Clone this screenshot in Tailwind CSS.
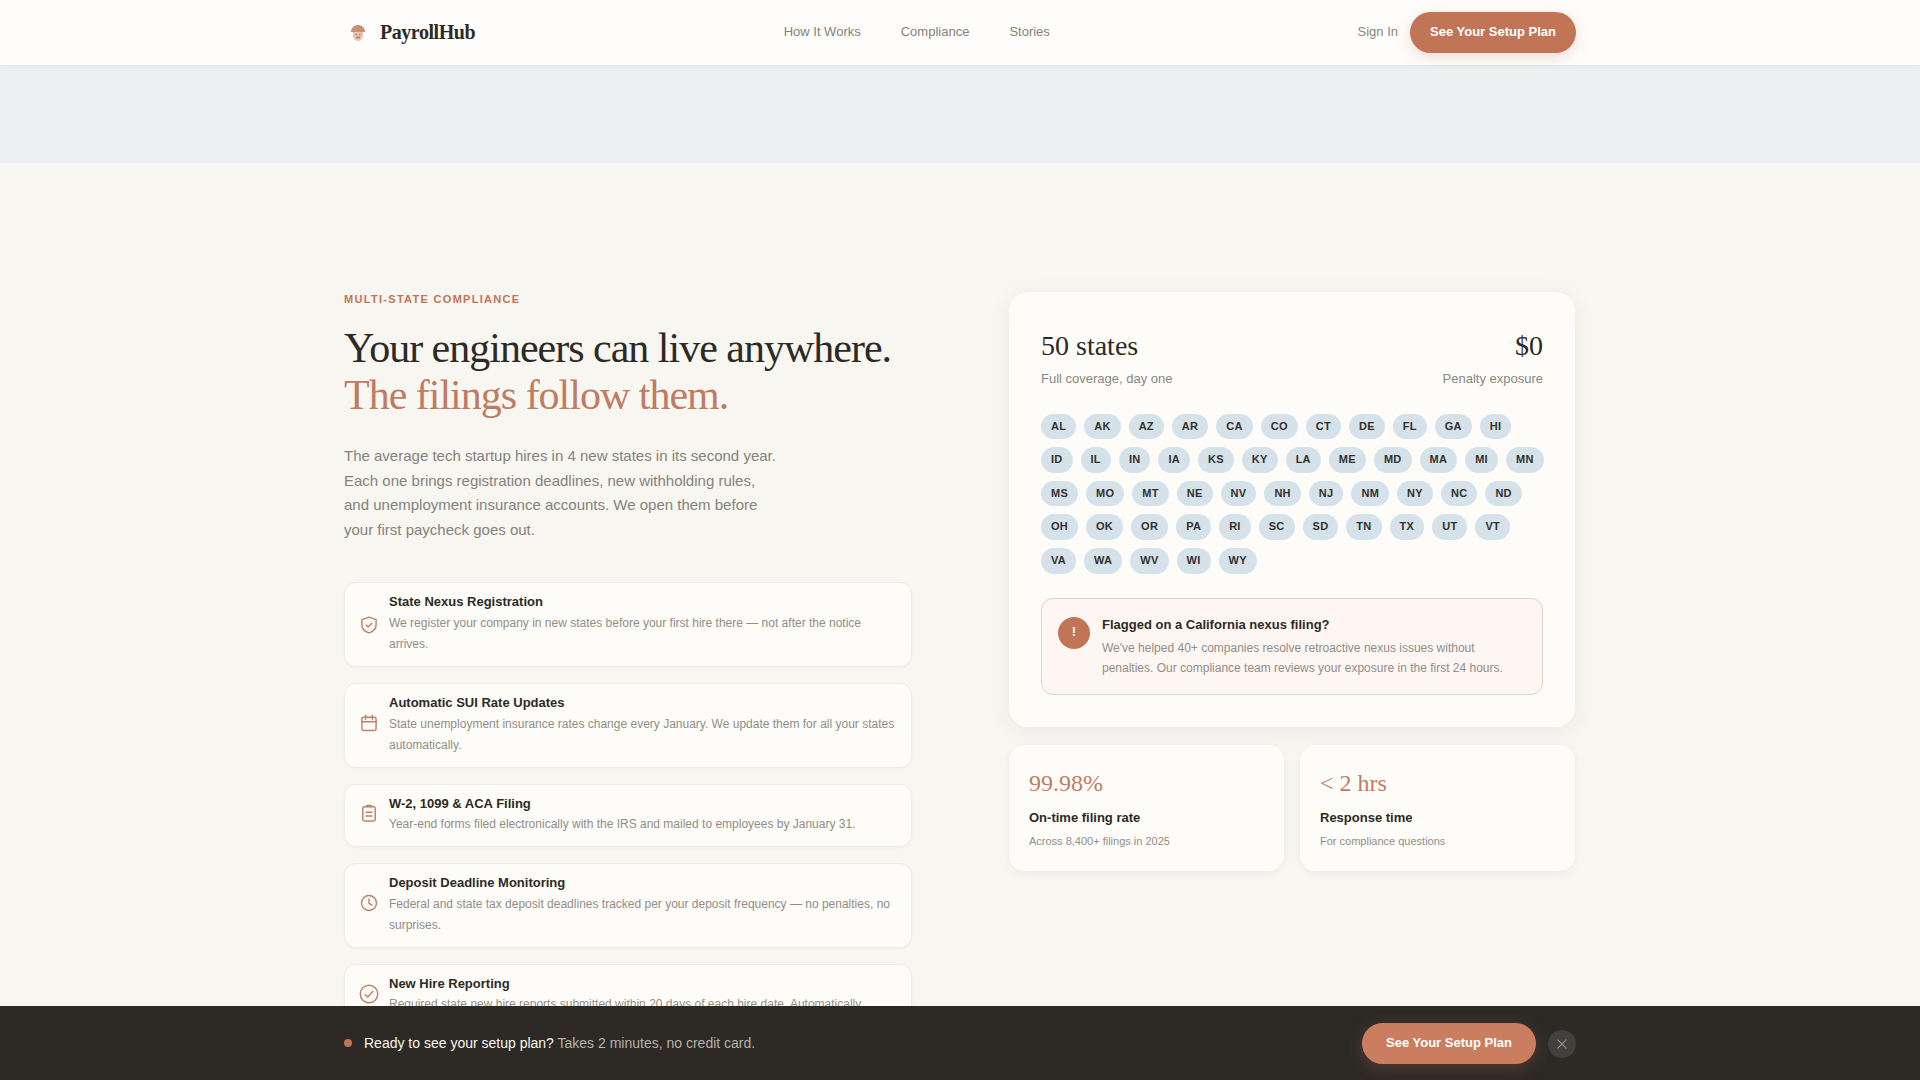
<!DOCTYPE html>
<html lang="en">
<head>
    <meta charset="UTF-8">
    <meta name="viewport" content="width=device-width, initial-scale=1.0">
    <title>PayrollHub - Multi-State Compliance</title>
    <script src="https://cdn.jsdelivr.net/npm/@tailwindcss/browser@4"></script>
</head>
<body class="h-screen overflow-hidden bg-[#f8f6f0] font-['Liberation_Sans',Arial,sans-serif] leading-[1.6] text-[#2d2a26]">

<!-- Nav -->
<header class="h-[65px] bg-[#fefdfb] shadow-[0_1px_3px_rgba(45,42,38,0.06)] relative">
    <div class="max-w-[1280px] mx-auto px-6 h-full flex items-center justify-between">
        <div class="flex items-center w-[300px]">
            <svg class="w-4 h-[18px] ml-1.5 mr-3.5" viewBox="0 0 16 18">
                <path d="M.8 8C1.200 3.500 4.500 1 8 1s6.800 2.500 7.200 7z" fill="#c98f78"/>
                <path d="M3 8h10v3.500c0 3-2.500 5.500-5 5.500s-5-2.500-5-5.500z" fill="#e8c4b3"/>
                <path d="M5.500 10.500h1.500M9 10.500h1.500M6 13.500h4" stroke="#b9745a" stroke-width="1.300" fill="none"/>
            </svg>
            <span class="font-['Liberation_Serif',serif] font-bold text-[20px] tracking-[-0.45px] -mt-0.5">PayrollHub</span>
        </div>
        <nav class="flex items-center gap-10 text-[13px] text-[#85827c] -ml-[168px]">
            <a href="#">How It Works</a>
            <a href="#">Compliance</a>
            <a href="#">Stories</a>
        </nav>
        <div class="flex items-center gap-3">
            <a href="#" class="text-[13px] text-[#8a8780]">Sign In</a>
            <a href="#" class="h-[41px] w-[166px] flex items-center justify-center rounded-full bg-[#c27556] text-white text-[13px] font-bold shadow-[0_4px_14px_rgba(194,117,86,0.25)]">See Your Setup Plan</a>
        </div>
    </div>
</header>

<!-- Band under nav -->
<div class="h-[98px] bg-[#ecf0f1]"></div>

<main class="max-w-[1280px] mx-auto px-6 pt-[129px] grid grid-cols-[568px_566px] gap-x-[97px] items-start">
    <!-- Left column -->
    <section>
        <p class="-mt-px text-[11px] leading-4 font-bold tracking-[1.3px] uppercase text-[#c27556] mb-[18px]">Multi-State Compliance</p>
        <h1 class="font-['Liberation_Serif',serif] font-normal text-[42px] leading-[46.500px] tracking-[-1px] mb-[26px]">
            Your engineers can live anywhere.<br>
            <span class="text-[#bf7c62]">The filings follow them.</span>
        </h1>
        <p class="text-[15px] leading-[24.500px] text-[#85827c] max-w-[436px] mb-10">The average tech startup hires in 4 new states in its second year. Each one brings registration deadlines, new withholding rules, and unemployment insurance accounts. We open them before your first paycheck goes out.</p>

        <div class="flex flex-col gap-4">
            <div class="flex items-center gap-[10px] bg-[#fdfcf9] border border-[#eeece6] rounded-xl pl-[14px] pr-4 py-[11px] shadow-[0_1px_3px_rgba(45,42,38,0.03)]">
                <svg class="w-5 h-5 shrink-0" viewBox="0 0 24 24" fill="none" stroke="#bf8066" stroke-width="1.700" stroke-linecap="round" stroke-linejoin="round">
                    <path d="M12 2.500l8.500 3v6.500c0 5-3.500 8-8.500 9.500-5-1.500-8.500-4.500-8.500-9.500V5.500z"/>
                    <path d="M8.500 12l2.500 2.500 4.500-4.500"/>
                </svg>
                <div>
                    <h3 class="text-[13px] leading-4 font-bold mb-[3px]">State Nexus Registration</h3>
                    <p class="text-[12px] leading-[21px] text-[#918e87]">We register your company in new states before your first hire there — not after the notice arrives.</p>
                </div>
            </div>
            <div class="flex items-center gap-[10px] bg-[#fdfcf9] border border-[#eeece6] rounded-xl pl-[14px] pr-4 py-[11px] shadow-[0_1px_3px_rgba(45,42,38,0.03)]">
                <svg class="w-5 h-5 shrink-0 -translate-y-0.5" viewBox="0 0 24 24" fill="none" stroke="#bf8066" stroke-width="1.700" stroke-linecap="round" stroke-linejoin="round">
                    <rect x="3.500" y="5" width="17" height="16" rx="2"/>
                    <path d="M8 2.500v5M16 2.500v5M3.500 10.500h17"/>
                </svg>
                <div>
                    <h3 class="text-[13px] leading-4 font-bold mb-[2.5px]">Automatic SUI Rate Updates</h3>
                    <p class="text-[12px] leading-[21px] text-[#918e87]">State unemployment insurance rates change every January. We update them for all your states automatically.</p>
                </div>
            </div>
            <div class="flex items-center gap-[10px] bg-[#fdfcf9] border border-[#eeece6] rounded-xl pl-[14px] pr-4 py-[11px] shadow-[0_1px_3px_rgba(45,42,38,0.03)]">
                <svg class="w-5 h-5 shrink-0 -translate-y-0.5" viewBox="0 0 24 24" fill="none" stroke="#bf8066" stroke-width="1.700" stroke-linecap="round" stroke-linejoin="round">
                    <rect x="4.500" y="4.500" width="15" height="17" rx="2"/>
                    <path d="M9.500 4.500V3h5v1.500M8.500 11h7M8.500 15.500h7"/>
                </svg>
                <div>
                    <h3 class="text-[13px] leading-4 font-bold mb-[2.5px]">W-2, 1099 &amp; ACA Filing</h3>
                    <p class="text-[12px] leading-[21px] text-[#918e87]">Year-end forms filed electronically with the IRS and mailed to employees by January 31.</p>
                </div>
            </div>
            <div class="flex items-center gap-[10px] bg-[#fdfcf9] border border-[#eeece6] rounded-xl pl-[14px] pr-4 py-[11px] shadow-[0_1px_3px_rgba(45,42,38,0.03)]">
                <svg class="w-5 h-5 shrink-0 -translate-y-0.5" viewBox="0 0 24 24" fill="none" stroke="#bf8066" stroke-width="1.700" stroke-linecap="round" stroke-linejoin="round">
                    <circle cx="12" cy="12" r="9"/>
                    <path d="M12 7v5.500l3.500 2"/>
                </svg>
                <div>
                    <h3 class="text-[13px] leading-4 font-bold mb-[2.5px]">Deposit Deadline Monitoring</h3>
                    <p class="text-[12px] leading-[21px] text-[#918e87]">Federal and state tax deposit deadlines tracked per your deposit frequency — no penalties, no surprises.</p>
                </div>
            </div>
            <div class="flex items-center gap-[10px] bg-[#fdfcf9] border border-[#eeece6] rounded-xl pl-[14px] pr-4 py-[11px] shadow-[0_1px_3px_rgba(45,42,38,0.03)]">
                <svg class="w-5 h-5 shrink-0 -translate-y-px" viewBox="0 0 24 24" fill="none" stroke="#bf8066" stroke-width="1.700" stroke-linecap="round" stroke-linejoin="round">
                    <circle cx="12" cy="12" r="10.500"/>
                    <path d="M7.500 12.500l3 3 6-6.500"/>
                </svg>
                <div>
                    <h3 class="text-[13px] leading-4 font-bold mb-[2.5px]">New Hire Reporting</h3>
                    <p class="text-[12px] leading-[21px] text-[#918e87]">Required state new hire reports submitted within 20 days of each hire date. Automatically.</p>
                </div>
            </div>
        </div>
    </section>

    <!-- Right column -->
    <section>
        <div class="bg-[#fdfcf9] rounded-[20px] p-8 shadow-[0_4px_24px_rgba(45,42,38,0.06)]">
            <div class="flex justify-between">
                <div>
                    <div class="font-['Liberation_Serif',serif] text-[28px]">50 states</div>
                    <div class="text-[13px] text-[#8a8780]">Full coverage, day one</div>
                </div>
                <div class="text-right">
                    <div class="font-['Liberation_Serif',serif] text-[28px]">$0</div>
                    <div class="text-[13px] text-[#8a8780]">Penalty exposure</div>
                </div>
            </div>

            <div class="flex flex-wrap gap-2 mt-6 -mr-1 text-[11px] font-bold tracking-[0.27px] text-[#33302c]">
                <span class="bg-[#d6e2ea] rounded-full px-2.5 py-1">AL</span>
                <span class="bg-[#d6e2ea] rounded-full px-2.5 py-1">AK</span>
                <span class="bg-[#d6e2ea] rounded-full px-2.5 py-1">AZ</span>
                <span class="bg-[#d6e2ea] rounded-full px-2.5 py-1">AR</span>
                <span class="bg-[#d6e2ea] rounded-full px-2.5 py-1">CA</span>
                <span class="bg-[#d6e2ea] rounded-full px-2.5 py-1">CO</span>
                <span class="bg-[#d6e2ea] rounded-full px-2.5 py-1">CT</span>
                <span class="bg-[#d6e2ea] rounded-full px-2.5 py-1">DE</span>
                <span class="bg-[#d6e2ea] rounded-full px-2.5 py-1">FL</span>
                <span class="bg-[#d6e2ea] rounded-full px-2.5 py-1">GA</span>
                <span class="bg-[#d6e2ea] rounded-full px-2.5 py-1">HI</span>
                <span class="bg-[#d6e2ea] rounded-full px-2.5 py-1">ID</span>
                <span class="bg-[#d6e2ea] rounded-full px-2.5 py-1">IL</span>
                <span class="bg-[#d6e2ea] rounded-full px-2.5 py-1">IN</span>
                <span class="bg-[#d6e2ea] rounded-full px-2.5 py-1">IA</span>
                <span class="bg-[#d6e2ea] rounded-full px-2.5 py-1">KS</span>
                <span class="bg-[#d6e2ea] rounded-full px-2.5 py-1">KY</span>
                <span class="bg-[#d6e2ea] rounded-full px-2.5 py-1">LA</span>
                <span class="bg-[#d6e2ea] rounded-full px-2.5 py-1">ME</span>
                <span class="bg-[#d6e2ea] rounded-full px-2.5 py-1">MD</span>
                <span class="bg-[#d6e2ea] rounded-full px-2.5 py-1">MA</span>
                <span class="bg-[#d6e2ea] rounded-full px-2.5 py-1">MI</span>
                <span class="bg-[#d6e2ea] rounded-full px-2.5 py-1">MN</span>
                <span class="bg-[#d6e2ea] rounded-full px-2.5 py-1">MS</span>
                <span class="bg-[#d6e2ea] rounded-full px-2.5 py-1">MO</span>
                <span class="bg-[#d6e2ea] rounded-full px-2.5 py-1">MT</span>
                <span class="bg-[#d6e2ea] rounded-full px-2.5 py-1">NE</span>
                <span class="bg-[#d6e2ea] rounded-full px-2.5 py-1">NV</span>
                <span class="bg-[#d6e2ea] rounded-full px-2.5 py-1">NH</span>
                <span class="bg-[#d6e2ea] rounded-full px-2.5 py-1">NJ</span>
                <span class="bg-[#d6e2ea] rounded-full px-2.5 py-1">NM</span>
                <span class="bg-[#d6e2ea] rounded-full px-2.5 py-1">NY</span>
                <span class="bg-[#d6e2ea] rounded-full px-2.5 py-1">NC</span>
                <span class="bg-[#d6e2ea] rounded-full px-2.5 py-1">ND</span>
                <span class="bg-[#d6e2ea] rounded-full px-2.5 py-1">OH</span>
                <span class="bg-[#d6e2ea] rounded-full px-2.5 py-1">OK</span>
                <span class="bg-[#d6e2ea] rounded-full px-2.5 py-1">OR</span>
                <span class="bg-[#d6e2ea] rounded-full px-2.5 py-1">PA</span>
                <span class="bg-[#d6e2ea] rounded-full px-2.5 py-1">RI</span>
                <span class="bg-[#d6e2ea] rounded-full px-2.5 py-1">SC</span>
                <span class="bg-[#d6e2ea] rounded-full px-2.5 py-1">SD</span>
                <span class="bg-[#d6e2ea] rounded-full px-2.5 py-1">TN</span>
                <span class="bg-[#d6e2ea] rounded-full px-2.5 py-1">TX</span>
                <span class="bg-[#d6e2ea] rounded-full px-2.5 py-1">UT</span>
                <span class="bg-[#d6e2ea] rounded-full px-2.5 py-1">VT</span>
                <span class="bg-[#d6e2ea] rounded-full px-2.5 py-1">VA</span>
                <span class="bg-[#d6e2ea] rounded-full px-2.5 py-1">WA</span>
                <span class="bg-[#d6e2ea] rounded-full px-2.5 py-1">WV</span>
                <span class="bg-[#d6e2ea] rounded-full px-2.5 py-1">WI</span>
                <span class="bg-[#d6e2ea] rounded-full px-2.5 py-1">WY</span>
            </div>

            <div class="flex items-start gap-3 mt-6 bg-[#fdf6f3] border border-[#e6cfc2] rounded-xl p-4">
                <div class="w-8 h-8 shrink-0 mt-0.5 rounded-full bg-[#c27556] text-white/90 text-[13px] font-bold flex items-center justify-center">!</div>
                <div>
                    <h4 class="text-[13px] font-bold">Flagged on a California nexus filing?</h4>
                    <p class="mt-[3.5px] text-[12px] leading-[19.800px] text-[#918e87]">We've helped 40+ companies resolve retroactive nexus issues without penalties. Our compliance team reviews your exposure in the first 24 hours.</p>
                </div>
            </div>
        </div>

        <div class="grid grid-cols-2 gap-4 mt-[18px]">
            <div class="bg-[#fdfcf9] rounded-2xl px-5 pt-6 pb-[22px] shadow-[0_2px_10px_rgba(45,42,38,0.05)]">
                <div class="font-['Liberation_Serif',serif] text-[24px] leading-7 text-[#c07d62] mb-3">99.98%</div>
                <div class="text-[13px] leading-[18px] font-bold">On-time filing rate</div>
                <div class="mt-[5.500px] text-[11px] leading-4 text-[#918e87]">Across 8,400+ filings in 2025</div>
            </div>
            <div class="bg-[#fdfcf9] rounded-2xl px-5 pt-6 pb-[22px] shadow-[0_2px_10px_rgba(45,42,38,0.05)]">
                <div class="font-['Liberation_Serif',serif] text-[24px] leading-7 text-[#c07d62] mb-3">&lt; 2 hrs</div>
                <div class="text-[13px] leading-[18px] font-bold">Response time</div>
                <div class="mt-[5.500px] text-[11px] leading-4 text-[#918e87]">For compliance questions</div>
            </div>
        </div>
    </section>
</main>

<!-- Sticky bottom bar -->
<div class="fixed bottom-0 inset-x-0 h-[74px] bg-[#2d2a26]">
    <div class="max-w-[1280px] mx-auto px-6 h-full flex items-center justify-between">
        <div class="flex items-center gap-3 text-[14px]">
            <span class="w-2 h-2 rounded-full bg-[#c27556]"></span>
            <p class="text-[#f7f6f0]">Ready to see your setup plan? <span class="text-[#b5b2ab]">Takes 2 minutes, no credit card.</span></p>
        </div>
        <div class="flex items-center gap-3">
            <a href="#" class="h-[41px] w-[174px] flex items-center justify-center rounded-full bg-[#cb7e5f] text-white text-[13px] font-bold shadow-[0_4px_16px_rgba(194,117,86,0.25)]">See Your Setup Plan</a>
            <button class="mt-0.5 w-7 h-7 rounded-full bg-white/10 flex items-center justify-center">
                <svg class="w-2.5 h-2.5" viewBox="0 0 12 12" fill="none" stroke="#989590" stroke-width="1.300" stroke-linecap="round"><path d="M1 1l10 10M11 1L1 11"/></svg>
            </button>
        </div>
    </div>
</div>
</body>
</html>
